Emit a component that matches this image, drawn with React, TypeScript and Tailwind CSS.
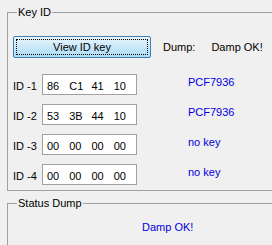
const rows = [
  { label: "ID -1", bytes: ["86", "C1", "41", "10"], type: "PCF7936" },
  { label: "ID -2", bytes: ["53", "3B", "44", "10"], type: "PCF7936" },
  { label: "ID -3", bytes: ["00", "00", "00", "00"], type: "no key" },
  { label: "ID -4", bytes: ["00", "00", "00", "00"], type: "no key" },
];

export default function App() {
  return (
    <div className="h-[245px] w-[272px] overflow-hidden bg-[#f0f0f0] font-['Liberation_Sans',Arial,sans-serif] text-[11px] leading-[14px] text-black">
      <fieldset className="ml-[7px] mt-[5px] w-[300px] border border-[#a0a0a0] pb-[5px] pl-[5px]">
        <legend className="ml-[4px] px-[1px]">Key ID</legend>
        <div className="mt-[17px] flex items-center">
          <button className="flex h-[22px] w-[138px] items-center justify-center rounded-[2px] border border-[#3c7fb1] bg-gradient-to-b from-[#eaf6fd] to-[#a9dbf6] p-[2px]">
            <span className="flex h-full w-full items-center justify-center border border-dotted border-black">
              View ID key
            </span>
          </button>
          <span className="ml-[12px]">Dump:</span>
          <span className="ml-[16px]">Damp OK!</span>
        </div>
        <div className="mt-[16px] flex flex-col gap-[9px]">
          {rows.map((r) => (
            <div key={r.label} className="flex items-center">
              <span className="w-[29px] pt-[2px]">{r.label}</span>
              <div className="flex h-[21px] w-[95px] items-center border border-[#a0a0a0] bg-white pl-[4px] pt-[2px]">
                {r.bytes.map((b, i) => (
                  <span key={i} className="w-[23.5px]">
                    {b}
                  </span>
                ))}
              </div>
              <span className="ml-[51px] mb-[6px] text-[#0000e0]">{r.type}</span>
            </div>
          ))}
        </div>
      </fieldset>
      <fieldset className="ml-[7px] mt-[5px] h-[80px] w-[300px] border border-[#a0a0a0] pl-[5px]">
        <legend className="ml-[4px] px-[1px]">Status Dump</legend>
        <div className="ml-[129px] mt-[10px] text-[#0000e0]">Damp OK!</div>
      </fieldset>
    </div>
  );
}
